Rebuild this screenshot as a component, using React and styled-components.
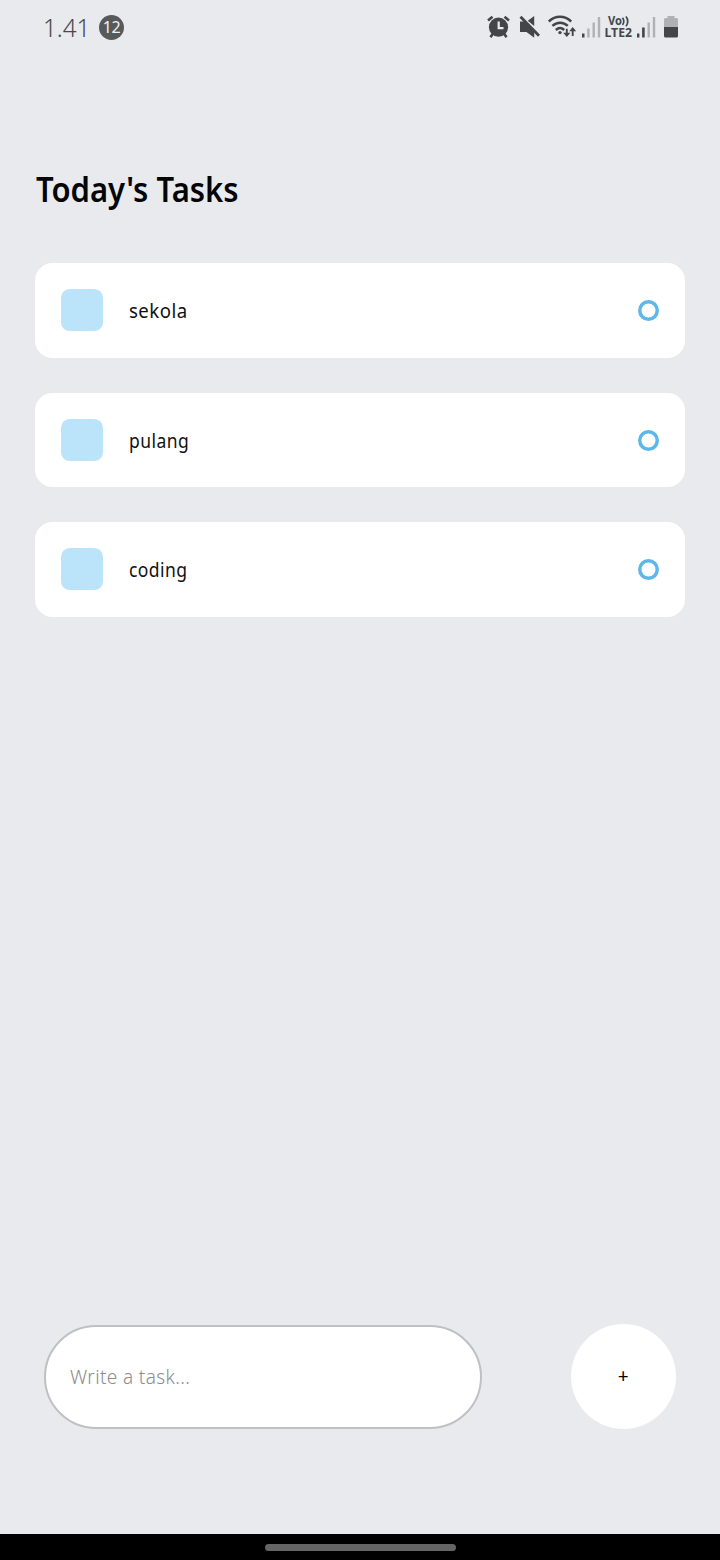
import React from "react";
import styled, { createGlobalStyle } from "styled-components";

const GlobalStyle = createGlobalStyle`
  *, *::before, *::after { box-sizing: border-box; }
  body { margin: 0; background: #e8eaed; font-family: "Noto Sans", "Open Sans", sans-serif; }
`;

const Screen = styled.div`
  width: 720px;
  height: 1560px;
  display: flex;
  flex-direction: column;
  background: #e8eaed;
  overflow: hidden;
`;

const StatusBar = styled.header`
  height: 54px;
  padding: 0 41px 0 43px;
  display: flex;
  align-items: center;
  justify-content: space-between;
`;

const StatusGroup = styled.div`
  display: flex;
  align-items: center;
`;

const Clock = styled.span`
  width: 56px;
  font-size: 26px;
  font-weight: 300;
  line-height: 36px;
  color: #47484b;
  white-space: nowrap;
  transform: scaleX(${(p) => p.$scale});
  transform-origin: left;
`;

const CountBadge = styled.span`
  width: 25px;
  height: 25px;
  border-radius: 50%;
  background: #58595b;
  color: #f2f2f4;
  font-size: 16px;
  line-height: 24px;
  text-align: center;
  letter-spacing: -0.5px;
`;

const StatusIcons = styled.svg`
  display: block;
`;

const Main = styled.main`
  padding: 112px 35px 0;
  flex: 1;
`;

const Title = styled.h1`
  margin: 0;
  height: 46px;
  line-height: 46px;
  font-size: 34px;
  font-weight: 600;
  color: #050507;
  white-space: nowrap;
  padding-left: 1px;
  transform: scaleX(${(p) => p.$scale});
  transform-origin: left;
`;

const TaskList = styled.ul`
  list-style: none;
  margin: 51.1px 0 0;
  padding: 0;
  display: flex;
  flex-direction: column;
  gap: 35px;
`;

const TaskCard = styled.li`
  height: 94.5px;
  padding: 26.25px;
  border-radius: 17.5px;
  background: #fff;
  display: flex;
  align-items: center;
`;

const Square = styled.span`
  width: 42px;
  height: 42px;
  border-radius: 8.75px;
  background: #bbe4fb;
  margin-right: 26px;
`;

const TaskName = styled.span`
  flex: 1;
  font-size: 20px;
  line-height: 28px;
  color: #111;
  padding-top: 2px;
  letter-spacing: 0.5px;
  transform: scaleX(${(p) => p.$scale});
  transform-origin: left;
`;

const Ring = styled.span`
  width: 21px;
  height: 21px;
  margin-top: 0.4px;
  border-radius: 50%;
  box-shadow: inset 0 0 0 3.5px #5db7e8;
`;

const Composer = styled.form`
  height: 105px;
  margin-bottom: 105px;
  display: flex;
  align-items: center;
  justify-content: space-around;
`;

const Field = styled.div`
  width: 437.5px;
  height: 104px;
  border: 2px solid #c0c0c2;
  border-radius: 52px;
  background: #fff;
  padding: 0 24px;
  display: flex;
  align-items: center;
`;

const Placeholder = styled.span`
  font-size: 20px;
  font-weight: 300;
  line-height: 28px;
  color: #8c8c8c;
  white-space: nowrap;
  letter-spacing: 0.4px;
  transform: scaleX(${(p) => p.$scale});
  transform-origin: left;
`;

const AddButton = styled.button`
  width: 105px;
  height: 105px;
  padding: 0 0 1px;
  border: 0;
  border-radius: 50%;
  background: #fff;
  color: #000;
  font: 400 19px/28px "Noto Sans", sans-serif;
`;

const NavBar = styled.footer`
  height: 26px;
  background: #000;
  display: flex;
  align-items: center;
  justify-content: center;
`;

const NavHandle = styled.span`
  width: 191px;
  height: 7px;
  border-radius: 4px;
  background: #656565;
`;

const tasks = [
  { name: "sekola", scale: 0.93 },
  { name: "pulang", scale: 0.875 },
  { name: "coding", scale: 0.875 },
];

const DARK = "#444548";
const PALE = "#b0b1b4";

function Indicators() {
  return (
    <StatusIcons width="194" height="30" viewBox="485 12 194 30" fill="none">
      <circle cx="498.5" cy="27.2" r="9.6" fill={DARK} />
      <path d="M488 20.5 492.5 16.8M509 20.5 504.5 16.8M492.6 34 490.5 37.3M504.4 34 506.5 37.3" stroke={DARK} strokeWidth="2.6" />
      <path d="M498.7 21.5V28.2H503.5" stroke="#e8eaed" strokeWidth="2.2" />

      <path d="M520 21.5H525.2L534.2 30.5V37.8L526.5 32H520ZM534.2 16V26L527.8 20.8Z" fill={DARK} />
      <path d="M520.5 16.8 539 35.8" stroke={DARK} strokeWidth="2.8" />

      <path d="M548.8 21.5C555.5 15.2 564.5 15.2 571.2 21.5M552.4 25.9C557 21.6 563.3 21.6 567.8 25.9M555.8 30C558.6 27.5 561.6 27.5 564.2 30" stroke={DARK} strokeWidth="2.5" />
      <circle cx="560" cy="32.6" r="1.7" fill={DARK} />
      <path d="M566.8 28.8V35.5M572.7 36V29.5" stroke={DARK} strokeWidth="1.9" />
      <path d="M563.2 32.8H570.4L566.8 37ZM569.2 31.2H576.2L572.7 27Z" fill={DARK} />

      <path d="M582 33.5H584.5V37.5H582Z" fill={DARK} />
      <path d="M587.2 28.5H589.6V37.5H587.2ZM592.5 22.5H594.9V37.5H592.5ZM597.8 17H600.2V37.5H597.8Z" fill={PALE} />

      <text x="608" y="25" textLength="14" lengthAdjust="spacingAndGlyphs" fontSize="12" fontWeight="700" fill={DARK}>Vo</text>
      <path d="M622.5 17.8Q625.2 21.4 622.5 25M626 16.5Q629.6 21.4 626 26.3" stroke={DARK} strokeWidth="1.7" />
      <text x="604.5" y="37.3" textLength="27.5" lengthAdjust="spacingAndGlyphs" fontSize="13" fontWeight="700" fill={DARK}>LTE2</text>

      <path d="M637 33.5H639.4V37.5H637ZM642.1 27.5H644.7V37.5H642.1Z" fill={DARK} />
      <path d="M647.5 22.5H649.9V37.5H647.5ZM652.8 17H655.2V37.5H652.8Z" fill={PALE} />

      <path d="M667.5 16H674.5V18H676.5Q678 18 678 19.5V27H664V19.5Q664 18 665.5 18H667.5Z" fill={PALE} />
      <path d="M664 27H678V36Q678 37.5 676.5 37.5H665.5Q664 37.5 664 36Z" fill={DARK} />
    </StatusIcons>
  );
}

export default function App() {
  return (
    <>
      <GlobalStyle />
      <Screen>
        <StatusBar>
          <StatusGroup>
            <Clock $scale={0.93}>1.41</Clock>
            <CountBadge>12</CountBadge>
          </StatusGroup>
          <Indicators />
        </StatusBar>
        <Main>
          <Title $scale={0.912}>Today's Tasks</Title>
          <TaskList>
            {tasks.map((task) => (
              <TaskCard key={task.name}>
                <Square />
                <TaskName $scale={task.scale}>{task.name}</TaskName>
                <Ring />
              </TaskCard>
            ))}
          </TaskList>
        </Main>
        <Composer onSubmit={(e) => e.preventDefault()}>
          <Field>
            <Placeholder $scale={0.95}>Write a task...</Placeholder>
          </Field>
          <AddButton type="submit">+</AddButton>
        </Composer>
        <NavBar>
          <NavHandle />
        </NavBar>
      </Screen>
    </>
  );
}
